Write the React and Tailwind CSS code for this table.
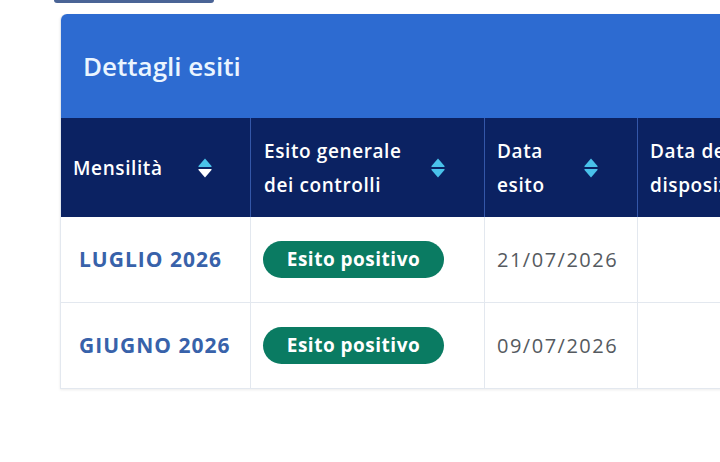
import React from "react";

function SortIcon({ active }) {
  return (
    <svg width="16" height="22" viewBox="0 0 16 22" className="shrink-0">
      <path d="M8 1.5 L14.5 9 Q15 10 14 10 L2 10 Q1 10 1.5 9 Z" fill="#49c2ea" />
      <path
        d="M8 20.5 L14.5 13 Q15 12 14 12 L2 12 Q1 12 1.5 13 Z"
        fill={active ? "#ffffff" : "#49c2ea"}
      />
    </svg>
  );
}

const righe = [
  { mese: "LUGLIO 2026", esito: "Esito positivo", data: "21/07/2026" },
  { mese: "GIUGNO 2026", esito: "Esito positivo", data: "09/07/2026" },
];

export default function App() {
  return (
    <div
      className="w-[720px] h-[462px] overflow-hidden bg-white"
      style={{ fontFamily: "'Open Sans', 'Noto Sans', sans-serif" }}
    >
      {/* bottone sopra, tagliato */}
      <div className="ml-[54px] w-[160px] h-[3px] rounded-b-md bg-[#4a6496]" />

      {/* card */}
      <div className="ml-[60px] mt-[11px] w-[800px] rounded-tl-md border-l border-[#e3e8ef] shadow-[0_1px_3px_rgba(0,0,0,0.08)]">
        <div className="h-[104px] bg-[#2d6bd1] rounded-tl-md flex items-center pl-[22px]">
          <h2 className="text-[26px] font-semibold text-[#eaf5ff]">
            Dettagli esiti
          </h2>
        </div>

        {/* intestazione tabella */}
        <div className="grid grid-cols-[190px_234px_153px_223px] bg-[#0b2262] text-white text-[19px] font-semibold leading-[34px] tracking-[0.6px] h-[99px]">
          <div className="flex items-center justify-between pl-[12px] pr-[37px] border-r border-[#3457a8]">
            <span>Mensilità</span>
            <SortIcon active />
          </div>
          <div className="flex items-center justify-between pl-[13px] pr-[38px] border-r border-[#3457a8]">
            <span>
              Esito generale
              <br />
              dei controlli
            </span>
            <SortIcon />
          </div>
          <div className="flex items-center justify-between pl-[12px] pr-[38px] border-r border-[#3457a8]">
            <span>
              Data
              <br />
              esito
            </span>
            <SortIcon />
          </div>
          <div className="flex items-center pl-[12px]">
            <span className="whitespace-nowrap">
              Data della
              <br />
              disposizione
            </span>
          </div>
        </div>

        {/* righe */}
        {righe.map((r) => (
          <div
            key={r.mese}
            className="grid grid-cols-[190px_234px_153px_223px] h-[86px] border-b border-[#e3e8ef]"
          >
            <div className="flex items-center pl-[18px] border-r border-[#e3e8ef]">
              <span className="text-[21px] font-bold text-[#3862aa] tracking-[1px]">
                {r.mese}
              </span>
            </div>
            <div className="flex items-center pl-[12px] border-r border-[#e3e8ef]">
              <span className="h-[37px] w-[181px] rounded-full bg-[#0a7b62] text-white text-[19px] font-bold flex items-center justify-center tracking-[0.5px]">
                {r.esito}
              </span>
            </div>
            <div className="flex items-center pl-[12px] border-r border-[#e3e8ef]">
              <span className="text-[20px] text-[#555a60] tracking-[1.5px]">
                {r.data}
              </span>
            </div>
            <div />
          </div>
        ))}
      </div>
    </div>
  );
}
